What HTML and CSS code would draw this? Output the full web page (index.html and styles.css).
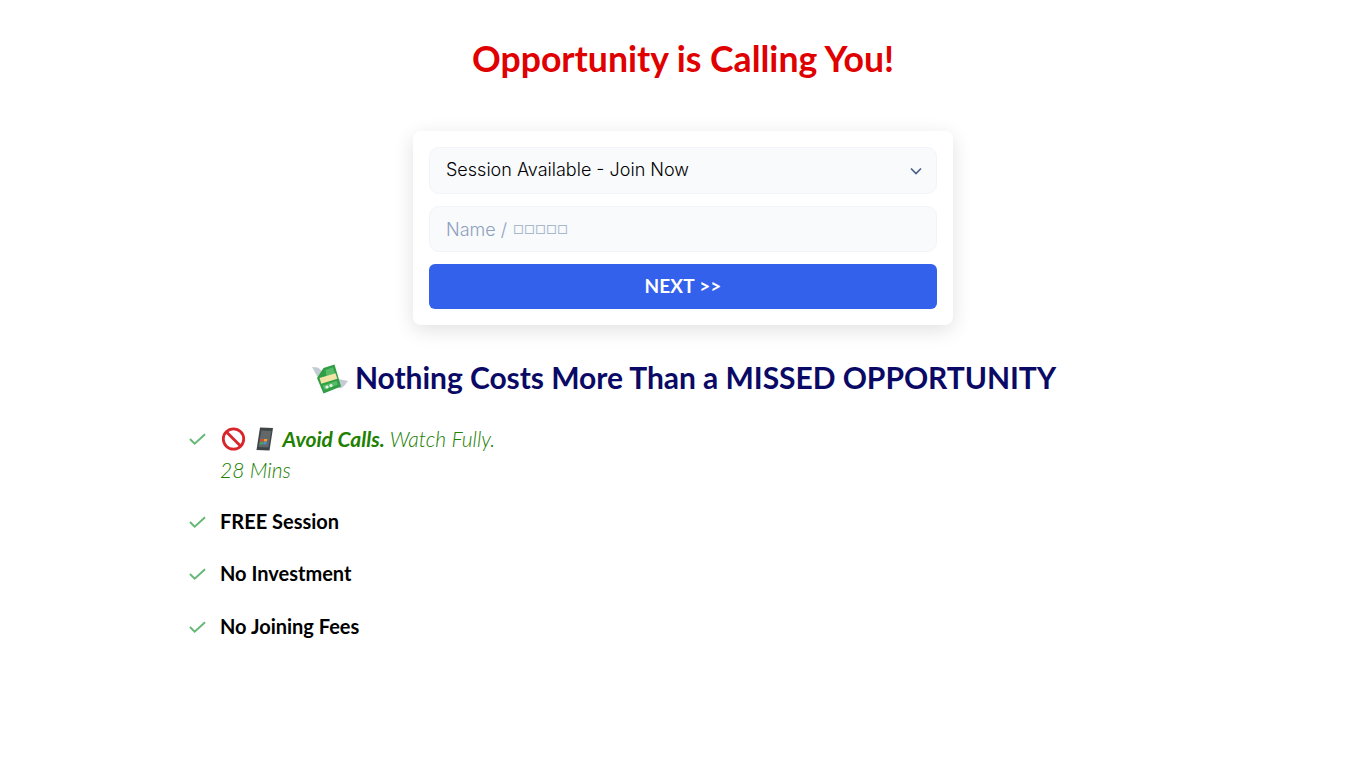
FILE: index.html
```html
<!DOCTYPE html>
<html lang="en">
<head>
    <meta charset="UTF-8">
    <meta name="viewport" content="width=device-width, initial-scale=1.0">
    <title>Opportunity is Calling You!</title>
    <link rel="stylesheet" href="styles.css">
</head>
<body>
    <main class="page">
        <h1 class="page-title">Opportunity is Calling You!</h1>

        <form class="signup-card">
            <div class="select-wrap">
                <select class="field field-select">
                    <option>Session Available - Join Now</option>
                </select>
                <svg class="select-arrow" viewBox="0 0 20 20" fill="none" stroke="#4a6088" stroke-width="1.7"><path d="M5 7.500l5 5 5-5"/></svg>
            </div>
            <div class="name-wrap">
                <input class="field" type="text" placeholder="Name /">
                <span class="name-boxes">□□□□□</span>
            </div>
            <button class="next-btn" type="button">NEXT &gt;&gt;</button>
        </form>

        <h2 class="section-title">
            <svg class="emoji-money" viewBox="0 0 36 30">
                <path d="M0 3l6 .5 6 5.500-1 7-6-4z" fill="#c3ccd3"/>
                <path d="M24 14.500l12 2.500-3 4-4 3.500-7-2z" fill="#c3ccd3"/>
                <path d="M11.500 4L22.500 .5l6.500 22-17.500 7L5 14z" fill="#2f9e44"/>
                <path d="M13.500 6l7.500-2.800 2 6.800-8.500 2.400z" fill="#58bb68"/>
                <path d="M7.500 14l16-4.800 1.800 5.600-16 5z" fill="#f2e3a6"/>
                <path d="M10.500 21.500l14-4.500 1.500 3.500-13.500 5.500z" fill="#58bb68"/>
                <circle cx="15" cy="23" r="1.600" fill="#e6f6e8"/>
                <circle cx="19" cy="21.500" r="1.600" fill="#e6f6e8"/>
            </svg>
            Nothing Costs More Than a MISSED OPPORTUNITY
        </h2>

        <ul class="benefits">
            <li class="benefit benefit-note">
                <svg class="check" viewBox="0 0 18 14" fill="none" stroke="#63b874" stroke-width="2"><path d="M1 7l5 5L17 2"/></svg>
                <span class="benefit-text">
                    <svg class="emoji" viewBox="0 0 24 24" fill="none" stroke="#d8262c" stroke-width="2.800"><circle cx="12" cy="12" r="10.200"/><path d="M5 5l14 14"/></svg>
                    <svg class="emoji" viewBox="0 0 24 24">
                        <path d="M7.500 .5l13 .5L17 23.500l-13-.5z" fill="#3f4446"/>
                        <path d="M8.800 3.500l10 .4L16 20.500l-10-.4z" fill="#62676a"/>
                        <path d="M8 12h3.200l-.4 2.600H7.600z" fill="#e0483a"/>
                        <path d="M11.600 12h3.200l-.4 2.600h-3.200z" fill="#f0a030"/>
                        <path d="M7.500 15h3.200l-.4 2.600H7.100z" fill="#46a84f"/>
                        <path d="M11.100 15h3.200l-.4 2.600h-3.200z" fill="#4a8fd8"/>
                    </svg>
                    <b>Avoid Calls.</b> Watch Fully. 28 Mins
                </span>
            </li>
            <li class="benefit">
                <svg class="check" viewBox="0 0 18 14" fill="none" stroke="#63b874" stroke-width="2"><path d="M1 7l5 5L17 2"/></svg>
                <span class="benefit-text">FREE Session</span>
            </li>
            <li class="benefit">
                <svg class="check" viewBox="0 0 18 14" fill="none" stroke="#63b874" stroke-width="2"><path d="M1 7l5 5L17 2"/></svg>
                <span class="benefit-text">No Investment</span>
            </li>
            <li class="benefit">
                <svg class="check" viewBox="0 0 18 14" fill="none" stroke="#63b874" stroke-width="2"><path d="M1 7l5 5L17 2"/></svg>
                <span class="benefit-text">No Joining Fees</span>
            </li>
        </ul>
    </main>
</body>
</html>
```

FILE: styles.css
```css
* {
    margin: 0;
    padding: 0;
    box-sizing: border-box;
}

body {
    background: #fff;
    font-family: 'Lato', sans-serif;
    color: #000;
}

.page {
    width: 1000px;
    margin: 0 auto;
    padding-top: 36px;
}

.page-title {
    font-size: 35.6px;
    line-height: 46px;
    font-weight: 700;
    color: #e00000;
    text-align: center;
}

.signup-card {
    width: 540px;
    margin: 49px auto 0;
    padding: 16px;
    background: #fff;
    border-radius: 8px;
    box-shadow: 0 5px 20px rgba(0, 0, 0, 0.12);
    display: flex;
    flex-direction: column;
    gap: 12px;
}

.select-wrap,
.name-wrap {
    position: relative;
}

.select-arrow {
    position: absolute;
    right: 11px;
    top: 14px;
    width: 20px;
    height: 20px;
    pointer-events: none;
}

.name-boxes {
    position: absolute;
    left: 84px;
    top: 1px;
    font-family: 'Inter', sans-serif;
    font-size: 12px;
    line-height: 46px;
    color: #a9b7cd;
    pointer-events: none;
}

.field {
    display: block;
    width: 100%;
    height: 46px;
    padding: 0 16px;
    font-family: 'Inter', sans-serif;
    font-size: 18px;
    font-weight: 300;
    color: #000;
    background: #f8fafc;
    border: 1px solid #f1f5f9;
    border-radius: 10px;
    outline: none;
}

.field-select {
    height: 47px;
    padding-bottom: 2px;
    appearance: none;
    -webkit-appearance: none;
}

.field::placeholder {
    color: #8ea0bc;
    opacity: 1;
}

.next-btn {
    height: 45px;
    padding-bottom: 2px;
    font-family: 'Lato', sans-serif;
    font-size: 19px;
    font-weight: 700;
    letter-spacing: 0.2px;
    color: #fff;
    background: #3461eb;
    border: none;
    border-radius: 6px;
}

.section-title {
    margin-top: 32px;
    padding-left: 2px;
    font-size: 30px;
    line-height: 40px;
    font-weight: 700;
    letter-spacing: -0.05px;
    color: #0a0a66;
    text-align: center;
}

.emoji-money {
    width: 36px;
    height: 30px;
    vertical-align: -5px;
}

.benefits {
    list-style: none;
    width: 320px;
    margin-top: 26px;
    padding-left: 6px;
}

.benefit {
    display: flex;
    gap: 14px;
    margin-bottom: 21.5px;
    font-size: 20px;
    line-height: 31px;
    font-weight: 700;
}

.check {
    flex: none;
    width: 17px;
    height: 14px;
    margin-top: 9px;
}

.benefit-note {
    margin-bottom: 20.5px;
    font-size: 21px;
    font-weight: 300;
    font-style: italic;
    color: #218000;
}

.benefit-note b {
    font-weight: 700;
}

.emoji {
    width: 25px;
    height: 24px;
    margin-left: 1px;
    vertical-align: -4px;
}
```
